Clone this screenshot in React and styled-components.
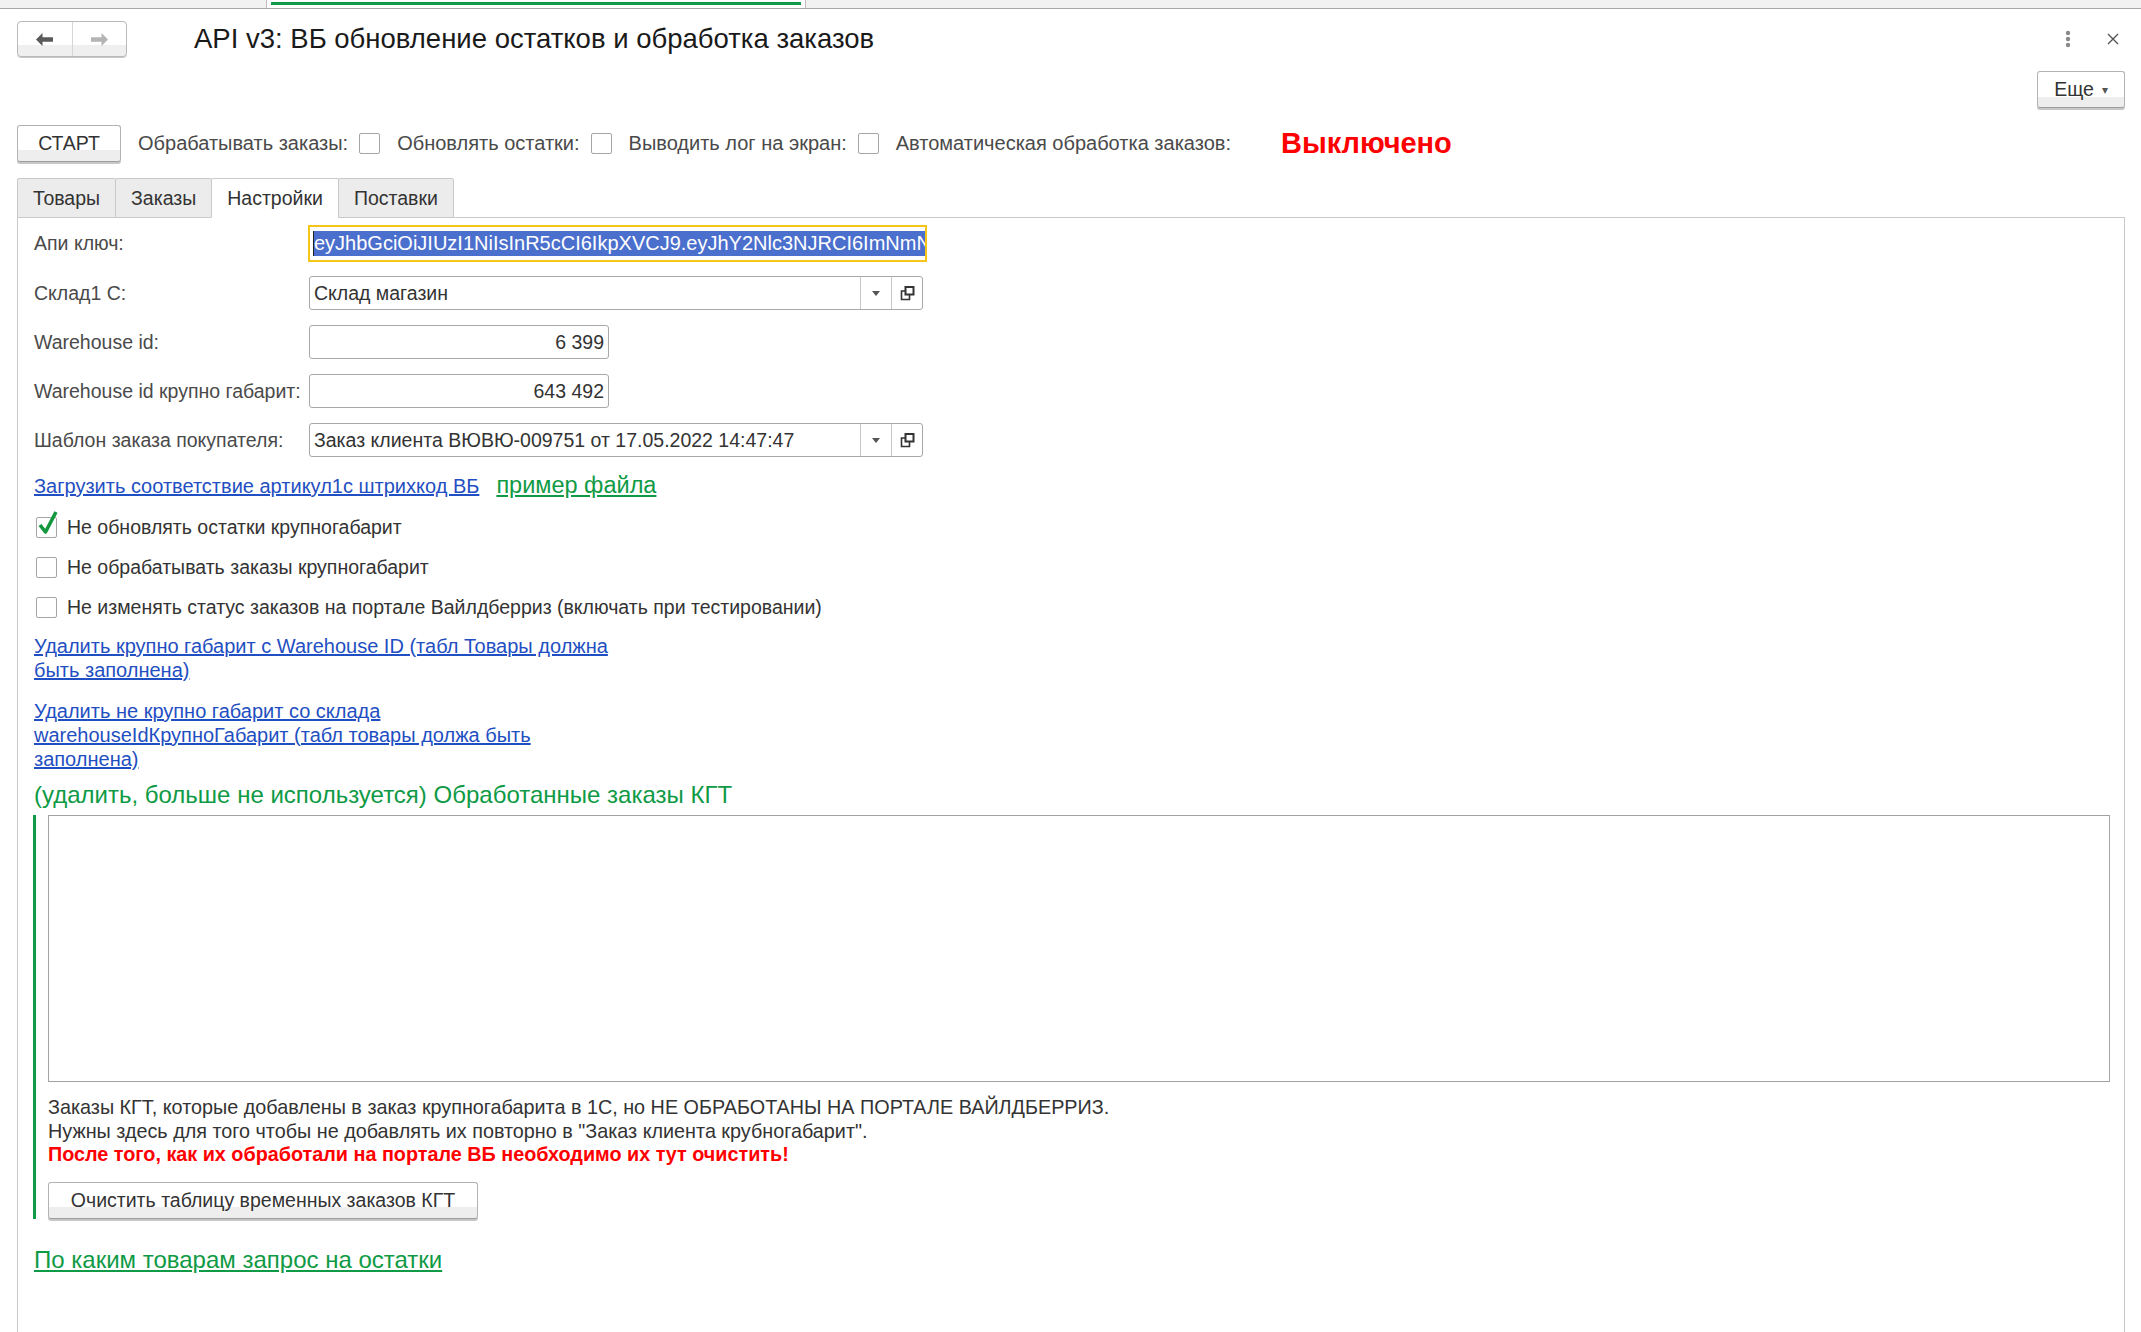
import React from "react";
import styled, { createGlobalStyle } from "styled-components";

const GlobalStyle = createGlobalStyle`
  html, body {
    margin: 0;
    padding: 0;
    background: #fff;
  }
  body {
    font-family: "Liberation Sans", Arial, sans-serif;
    color: #333;
  }
  #root {
    min-height: 100vh;
  }
`;

const BackIcon = ({ color }) => (
  <svg width="17" height="13" viewBox="0 0 17 13">
    <path d="M0 6.5 L6.5 0 V4.3 H17 V8.7 H6.5 V13 Z" fill={color} />
  </svg>
);

const ForwardIcon = ({ color }) => (
  <svg width="17" height="13" viewBox="0 0 17 13">
    <path d="M17 6.5 L10.5 0 V4.3 H0 V8.7 H10.5 V13 Z" fill={color} />
  </svg>
);

const KebabIcon = () => (
  <svg width="6" height="18" viewBox="0 0 6 18">
    <circle cx="3" cy="3" r="2.2" fill="#8a8a8a" />
    <circle cx="3" cy="9" r="2.2" fill="#8a8a8a" />
    <circle cx="3" cy="15" r="2.2" fill="#8a8a8a" />
  </svg>
);

const CloseIcon = () => (
  <svg width="12" height="12" viewBox="0 0 12 12">
    <path d="M1 1 L11 11 M11 1 L1 11" stroke="#555" strokeWidth="1.4" />
  </svg>
);

const DropArrow = () => (
  <svg width="8" height="5" viewBox="0 0 8 5">
    <path d="M0 0 H8 L4 5 Z" fill="#555" />
  </svg>
);

const OpenIcon = () => (
  <svg width="15" height="15" viewBox="0 0 15 15">
    <rect x="5.5" y="1" width="8" height="7.5" fill="none" stroke="#333" strokeWidth="2" />
    <path d="M5 5 H1.5 V13.5 H9.5 V9" fill="none" stroke="#333" strokeWidth="1.6" />
  </svg>
);

const CheckMark = () => (
  <svg width="22" height="26" viewBox="0 0 22 26">
    <path d="M3 15 L8.5 22 L19 2" fill="none" stroke="#13973e" strokeWidth="3.6" strokeLinejoin="round" />
  </svg>
);

const App = () => {
  return (
    <Page>
      <GlobalStyle />
      <TopStrip>
        <StripTab />
      </TopStrip>

      <Content>
        <Header>
          <NavGroup>
            <NavButton>
              <BackIcon color="#5a5a5a" />
            </NavButton>
            <NavButton>
              <ForwardIcon color="#b4b4b4" />
            </NavButton>
          </NavGroup>
          <Title>API v3: ВБ обновление остатков и обработка заказов</Title>
          <HeaderTools>
            <KebabIcon />
            <CloseIcon />
          </HeaderTools>
        </Header>

        <MoreRow>
          <Button $small>
            Еще <SmallArrow>▾</SmallArrow>
          </Button>
        </MoreRow>

        <StartRow>
          <Button>СТАРТ</Button>
          <Label>Обрабатывать заказы:</Label>
          <Box />
          <Label>Обновлять остатки:</Label>
          <Box />
          <Label>Выводить лог на экран:</Label>
          <Box />
          <Label>Автоматическая обработка заказов:</Label>
          <Status>Выключено</Status>
        </StartRow>

        <Tabs>
          <Tab>Товары</Tab>
          <Tab>Заказы</Tab>
          <Tab $active>Настройки</Tab>
          <Tab>Поставки</Tab>
        </Tabs>

        <Panel>
          <Form>
            <Label>Апи ключ:</Label>
            <ApiField>
              <Selected>eyJhbGciOiJIUzI1NiIsInR5cCI6IkpXVCJ9.eyJhY2Nlc3NJRCI6ImNmNWYxYjk2</Selected>
            </ApiField>

            <Label>Склад1 С:</Label>
            <SelectField>
              <FieldValue>Склад магазин</FieldValue>
              <FieldButton>
                <DropArrow />
              </FieldButton>
              <FieldButton>
                <OpenIcon />
              </FieldButton>
            </SelectField>

            <Label>Warehouse id:</Label>
            <NumberField>6 399</NumberField>

            <Label>Warehouse id крупно габарит:</Label>
            <NumberField>643 492</NumberField>

            <Label>Шаблон заказа покупателя:</Label>
            <SelectField>
              <FieldValue>Заказ клиента ВЮВЮ-009751 от 17.05.2022 14:47:47</FieldValue>
              <FieldButton>
                <DropArrow />
              </FieldButton>
              <FieldButton>
                <OpenIcon />
              </FieldButton>
            </SelectField>
          </Form>

          <LinksRow>
            <Link>Загрузить соответствие артикул1с штрихкод ВБ</Link>
            <GreenLink>пример файла</GreenLink>
          </LinksRow>

          <CheckList>
            <CheckRow>
              <Box $checked>
                <CheckMark />
              </Box>
              Не обновлять остатки крупногабарит
            </CheckRow>
            <CheckRow>
              <Box />
              Не обрабатывать заказы крупногабарит
            </CheckRow>
            <CheckRow>
              <Box />
              Не изменять статус заказов на портале Вайлдберриз (включать при тестировании)
            </CheckRow>
          </CheckList>

          <BlockLink>
            <Link>Удалить крупно габарит с Warehouse ID (табл Товары должна быть заполнена)</Link>
          </BlockLink>
          <BlockLink $gap={17}>
            <Link>Удалить не крупно габарит со склада warehouseIdКрупноГабарит (табл товары должа быть заполнена)</Link>
          </BlockLink>

          <GreenTitle>(удалить, больше не используется) Обработанные заказы КГТ</GreenTitle>

          <Group>
            <TextArea />
            <Note>
              Заказы КГТ, которые добавлены в заказ крупногабарита в 1С, но НЕ ОБРАБОТАНЫ НА ПОРТАЛЕ ВАЙЛДБЕРРИЗ.
              <br />
              Нужны здесь для того чтобы не добавлять их повторно в "Заказ клиента крубногабарит".
              <br />
              <Warning>После того, как их обработали на портале ВБ необходимо их тут очистить!</Warning>
            </Note>
            <Button $wide>Очистить таблицу временных заказов КГТ</Button>
          </Group>

          <BottomLink>По каким товарам запрос на остатки</BottomLink>
        </Panel>
      </Content>
    </Page>
  );
};

const Page = styled.div`
  min-height: 100vh;
  display: flex;
  flex-direction: column;
`;

const TopStrip = styled.div`
  height: 8px;
  background: #f2f2f2;
  border-bottom: 1px solid #a9a9a9;
  display: flex;
`;

const StripTab = styled.div`
  margin-left: 266px;
  width: 538px;
  background: #fff;
  border-left: 1px solid #c0c0c0;
  border-right: 1px solid #c0c0c0;
  position: relative;

  &::before {
    content: "";
    position: absolute;
    left: 4px;
    right: 4px;
    top: 2px;
    height: 3px;
    background: #0d9a45;
  }
`;

const Content = styled.div`
  flex: 1;
  display: flex;
  flex-direction: column;
  padding: 0 16px 0 17px;
`;

const Header = styled.div`
  display: flex;
  align-items: center;
  padding-top: 12px;
  height: 36px;
`;

const NavGroup = styled.div`
  display: flex;
  width: 110px;
  height: 36px;
  border: 1px solid #b9b9b9;
  border-radius: 4px;
  box-sizing: border-box;
  background: linear-gradient(to bottom, #fff 68%, #efefef 68%);
  box-shadow: 0 1px 0 #c8c8c8;
`;

const NavButton = styled.div`
  flex: 1;
  display: flex;
  align-items: center;
  justify-content: center;

  & + & {
    border-left: 1px solid #d6d6d6;
  }
`;

const Title = styled.div`
  margin-left: 67px;
  font-size: 27.5px;
  color: #1a1a1a;
  flex: 1;
`;

const HeaderTools = styled.div`
  display: flex;
  align-items: center;
  gap: 36px;
  padding-right: 6px;
`;

const MoreRow = styled.div`
  display: flex;
  justify-content: flex-end;
  margin-top: 14px;
`;

const Button = styled.div`
  display: inline-flex;
  align-items: center;
  justify-content: center;
  flex-shrink: 0;
  box-sizing: border-box;
  height: 37px;
  width: ${(p) => (p.$wide ? "430px" : p.$small ? "88px" : "104px")};
  border: 1px solid #b3b3b3;
  border-bottom-color: #9d9d9d;
  border-radius: 3px;
  background: linear-gradient(to bottom, #fff 70%, #eeeeee 70%);
  box-shadow: 0 2px 0 #c7c7c7;
  font-size: 19.5px;
  color: #333;
  cursor: pointer;
  white-space: nowrap;
`;

const SmallArrow = styled.span`
  font-size: 12px;
  margin-left: 8px;
  color: #555;
`;

const Label = styled.div`
  font-size: 19.5px;
  color: #4a4a4a;
  white-space: nowrap;
`;

const StartRow = styled.div`
  display: flex;
  align-items: center;
  margin-top: 16px;
  height: 39px;

  & > ${Button} {
    margin-right: 17px;
  }

  & > ${Label} {
    font-size: 20px;
  }
`;

const Box = styled.div`
  width: 21px;
  height: 21px;
  box-sizing: border-box;
  border: 1px solid #a6a6a6;
  border-radius: 2px;
  background: #fff;
  flex-shrink: 0;
  position: relative;

  ${StartRow} & {
    margin: 0 17px 0 11px;
  }

  svg {
    position: absolute;
    left: 0;
    bottom: 1px;
  }
`;

const Status = styled.div`
  margin-left: 50px;
  font-size: 29px;
  font-weight: bold;
  color: #ff0000;
`;

const Tabs = styled.div`
  display: flex;
  margin-top: 15px;
  position: relative;
  z-index: 1;
  margin-bottom: -1px;
`;

const Tab = styled.div`
  box-sizing: border-box;
  padding: 0 15px;
  display: flex;
  align-items: center;
  font-size: 19.5px;
  color: #333;
  border: 1px solid #c9c9c9;
  border-bottom: 1px solid ${(p) => (p.$active ? "#fff" : "#c9c9c9")};
  background: ${(p) => (p.$active ? "#fff" : "#ececec")};
  height: 40px;
  border-radius: 2px 2px 0 0;

  & + & {
    margin-left: -1px;
  }
`;

const Panel = styled.div`
  flex: 1;
  border: 1px solid #c9c9c9;
  border-bottom: none;
  padding: 7px 14px 20px 16px;
  display: flex;
  flex-direction: column;
  align-items: flex-start;
`;

const Form = styled.div`
  display: grid;
  grid-template-columns: 275px auto;
  row-gap: 15px;
  align-items: center;
  justify-items: start;
`;

const ApiField = styled.div`
  width: 619px;
  height: 37px;
  box-sizing: border-box;
  border: 2px solid #f5c518;
  padding: 4px 2px 4px 3px;
  overflow: hidden;
  white-space: nowrap;
  margin-left: -1px;
  margin-bottom: -1px;
`;

const Selected = styled.span`
  display: inline-block;
  height: 100%;
  line-height: 25px;
  font-size: 20px;
  color: #fff;
  background: #4b6fcd;
  border-left: 1px solid #222;
`;

const SelectField = styled.div`
  width: 614px;
  height: 34px;
  box-sizing: border-box;
  border: 1px solid #a9a9a9;
  border-radius: 3px;
  display: flex;
  align-items: stretch;
`;

const FieldValue = styled.div`
  flex: 1;
  display: flex;
  align-items: center;
  padding-left: 4px;
  font-size: 19.5px;
  color: #333;
  white-space: nowrap;
  overflow: hidden;
`;

const FieldButton = styled.div`
  width: 30px;
  display: flex;
  align-items: center;
  justify-content: center;
  border-left: 1px solid #c6c6c6;
`;

const NumberField = styled.div`
  width: 300px;
  height: 34px;
  box-sizing: border-box;
  border: 1px solid #a9a9a9;
  border-radius: 3px;
  display: flex;
  align-items: center;
  justify-content: flex-end;
  padding-right: 4px;
  font-size: 19.5px;
  color: #333;
`;

const LinksRow = styled.div`
  display: flex;
  align-items: baseline;
  gap: 17px;
  margin-top: 15px;
  height: 26px;
`;

const Link = styled.span`
  font-size: 20px;
  line-height: 23px;
  color: #1f4fc2;
  text-decoration: underline;
  cursor: pointer;
`;

const GreenLink = styled.span`
  font-size: 23.5px;
  color: #0f9a45;
  text-decoration: underline;
  cursor: pointer;
`;

const CheckList = styled.div`
  margin-top: 9px;
  display: flex;
  flex-direction: column;
`;

const CheckRow = styled.div`
  height: 40px;
  display: flex;
  align-items: center;
  gap: 10px;
  font-size: 19.5px;
  color: #333;
  padding-left: 2px;
`;

const BlockLink = styled.div`
  max-width: 605px;
  margin-top: ${(p) => p.$gap || 8}px;
  line-height: 23px;
`;

const GreenTitle = styled.div`
  margin-top: 9px;
  font-size: 24px;
  line-height: 27px;
  color: #0f9a45;
`;

const Group = styled.div`
  align-self: stretch;
  margin-top: 7px;
  margin-left: -1px;
  border-left: 3px solid #0f9a45;
  padding-left: 12px;
  display: flex;
  flex-direction: column;
  align-items: flex-start;
`;

const TextArea = styled.div`
  align-self: stretch;
  height: 267px;
  box-sizing: border-box;
  border: 1px solid #a3a3a3;
  background: #fff;
`;

const Note = styled.div`
  margin-top: 14px;
  margin-bottom: 15px;
  font-size: 19.8px;
  line-height: 23.5px;
  color: #333;
`;

const Warning = styled.span`
  color: #ff0000;
  font-weight: bold;
`;

const BottomLink = styled.div`
  margin-top: 27px;
  font-size: 24px;
  line-height: 27px;
  color: #0f9a45;
  text-decoration: underline;
  cursor: pointer;
`;

export default App;
